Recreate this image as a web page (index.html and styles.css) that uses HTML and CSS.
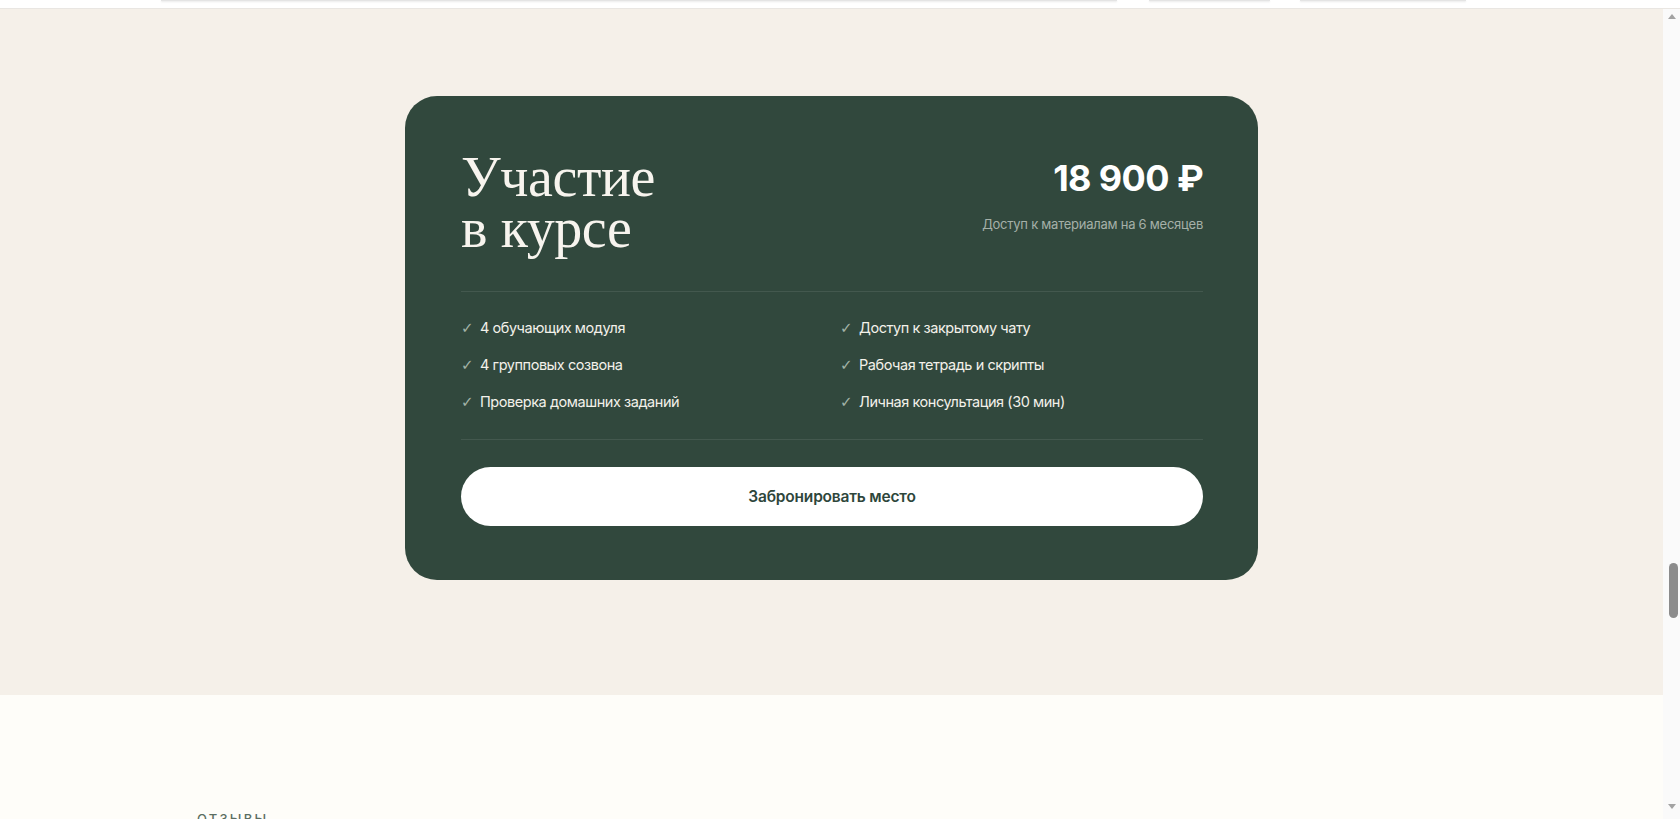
FILE: index.html
```html
<!DOCTYPE html>
<html lang="ru">
<head>
<meta charset="utf-8">
<title>Участие в курсе</title>
<link rel="stylesheet" href="styles.css">
</head>
<body>
<div class="topbar">
  <span class="tb-pill tb-a"></span>
  <span class="tb-pill tb-b"></span>
  <span class="tb-pill tb-c"></span>
</div>
<div class="page">
  <main class="main">
    <section class="pricing">
      <div class="card">
        <div class="card-head">
          <h2 class="title"><span class="tline">Участие</span><span class="tline">в курсе</span></h2>
          <div class="price-box">
            <div class="price">18 900 ₽</div>
            <div class="price-note">Доступ к материалам на 6 месяцев</div>
          </div>
        </div>
        <ul class="features">
          <li><span class="check">✓</span>4 обучающих модуля</li>
          <li><span class="check">✓</span>Доступ к закрытому чату</li>
          <li><span class="check">✓</span>4 групповых созвона</li>
          <li><span class="check">✓</span>Рабочая тетрадь и скрипты</li>
          <li><span class="check">✓</span>Проверка домашних заданий</li>
          <li><span class="check">✓</span>Личная консультация (30 мин)</li>
        </ul>
        <button class="cta">Забронировать место</button>
      </div>
    </section>
    <section class="reviews">
      <div class="label">Отзывы</div>
    </section>
  </main>
  <aside class="scrollbar">
    <span class="arrow up"></span>
    <span class="thumb"></span>
    <span class="arrow down"></span>
  </aside>
</div>
</body>
</html>
```
FILE: styles.css
```css
* { box-sizing: border-box; }
html, body { margin: 0; padding: 0; }
body {
  width: 1680px;
  height: 819px;
  overflow: hidden;
  background: #fefdf9;
  font-family: Inter, "Noto Sans", "Liberation Sans", sans-serif;
}
.topbar {
  height: 9px;
  background: #ffffff;
  border-bottom: 1px solid #e9e6e2;
  display: flex;
  align-items: flex-start;
  padding-left: 161px;
}
.tb-pill {
  display: block;
  height: 1px;
  background: #e4e4e4;
  box-shadow: 0 1px 2px rgba(0,0,0,0.12);
}
.tb-a { width: 956px; }
.tb-b { width: 121px; margin-left: 32px; }
.tb-c { width: 166px; margin-left: 30px; }
.page {
  display: flex;
  height: 810px;
}
.main {
  flex: 1;
  display: flex;
  flex-direction: column;
  overflow: hidden;
}
.pricing {
  flex: none;
  background: #f5f0e9;
  height: 686px;
  padding-top: 87px;
  display: flex;
  justify-content: center;
}
.card {
  width: 853px;
  height: 484px;
  background: #31483d;
  border-radius: 32px;
  padding: 56px 55px 0 56px;
  display: flex;
  flex-direction: column;
}
.card-head {
  display: flex;
  justify-content: space-between;
  align-items: flex-start;
  padding-bottom: 37px;
  border-bottom: 1px solid rgba(255,255,255,0.09);
}
.title {
  margin: 0;
  font-family: "Liberation Serif", "DejaVu Serif", serif;
  font-weight: 400;
  font-size: 56px;
  line-height: 51px;
  color: #f7f4ee;
  letter-spacing: -0.4px;
  display: flex;
  flex-direction: column;
}
.tline {
  display: block;
  height: 51px;
}
.price-box {
  display: flex;
  flex-direction: column;
  align-items: flex-end;
}
.price {
  margin-top: 8px;
  font-size: 36px;
  line-height: 37px;
  font-weight: 700;
  color: #ffffff;
  letter-spacing: -0.6px;
}
.price-note {
  margin-top: 17px;
  font-size: 13px;
  line-height: 20px;
  color: #a5b0a8;
  letter-spacing: -0.25px;
}
.features {
  list-style: none;
  margin: 0;
  padding: 25px 0 26px;
  display: grid;
  grid-template-columns: 1fr 1fr;
  column-gap: 16px;
  row-gap: 15px;
  border-bottom: 1px solid rgba(255,255,255,0.09);
}
.features li {
  display: flex;
  align-items: center;
  font-size: 14.5px;
  line-height: 22px;
  color: #f3f1ea;
  letter-spacing: -0.45px;
}
.check {
  width: 19px;
  flex: none;
  font-family: "DejaVu Sans", sans-serif;
  font-size: 15px;
  color: #a2b3a7;
}
.cta {
  margin-top: 27px;
  height: 59px;
  width: 100%;
  border: none;
  border-radius: 30px;
  background: #ffffff;
  color: #2e463b;
  font-family: Inter, "Noto Sans", sans-serif;
  font-size: 15.5px;
  font-weight: 600;
  letter-spacing: -0.2px;
  cursor: pointer;
}
.reviews {
  flex: 1;
  padding-top: 116px;
  padding-left: 197px;
}
.label {
  font-size: 13px;
  line-height: 16px;
  letter-spacing: 2.2px;
  text-transform: uppercase;
  color: #5b6d62;
  font-weight: 500;
}
.scrollbar {
  width: 17px;
  flex: none;
  background: #fafafa;
  display: flex;
  flex-direction: column;
  align-items: center;
  padding-top: 5px;
}
.arrow {
  display: block;
  width: 0;
  height: 0;
  border-left: 4px solid transparent;
  border-right: 4px solid transparent;
}
.arrow.up { border-bottom: 5px solid #a3a3a3; }
.arrow.down { border-top: 5px solid #a3a3a3; margin-top: 186px; }
.thumb {
  display: block;
  width: 9px;
  height: 55px;
  border-radius: 5px;
  background: #8c8c8c;
  margin-top: 544px;
  margin-left: 3px;
}
```
